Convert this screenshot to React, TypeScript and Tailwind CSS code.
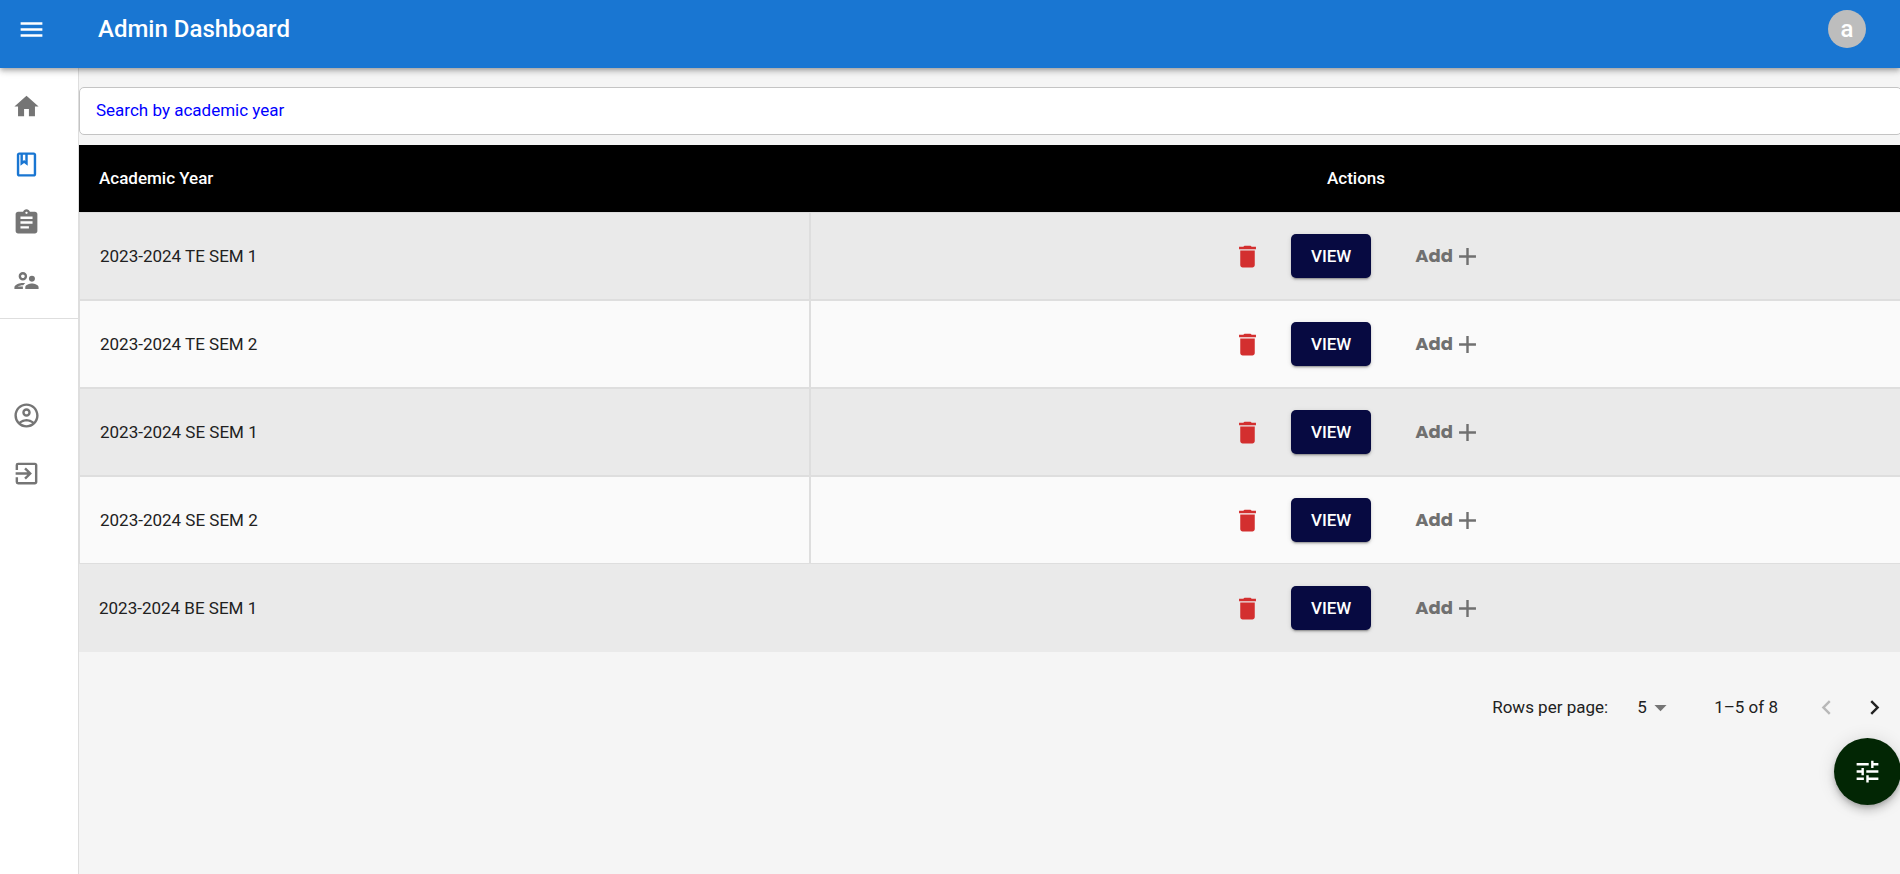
import {
  MdAdd,
  MdArrowDropDown,
  MdAssignment,
  MdDelete,
  MdExitToApp,
  MdHome,
  MdKeyboardArrowLeft,
  MdKeyboardArrowRight,
  MdMenu,
  MdOutlineAccountCircle,
  MdOutlineClass,
  MdOutlineSupervisorAccount,
  MdTune,
} from "react-icons/md";
import type { IconType } from "react-icons";

type NavItem = { label: string; icon: IconType; active?: boolean };

const mainNav: NavItem[] = [
  { label: "Home", icon: MdHome },
  { label: "Academic years", icon: MdOutlineClass, active: true },
  { label: "Subjects", icon: MdAssignment },
  { label: "Teachers", icon: MdOutlineSupervisorAccount },
];

const userNav: NavItem[] = [
  { label: "Profile", icon: MdOutlineAccountCircle },
  { label: "Logout", icon: MdExitToApp },
];

const years = [
  "2023-2024 TE SEM 1",
  "2023-2024 TE SEM 2",
  "2023-2024 SE SEM 1",
  "2023-2024 SE SEM 2",
  "2023-2024 BE SEM 1",
];

function NavList({ items }: { items: NavItem[] }) {
  return (
    <ul>
      {items.map(({ label, icon: Icon, active }) => (
        <li key={label}>
          <a
            href="#"
            aria-label={label}
            className={`flex h-[58px] items-center pl-3 ${active ? "text-[#1976d2]" : "text-[#757575]"}`}
          >
            <Icon className="size-[29px]" />
          </a>
        </li>
      ))}
    </ul>
  );
}

function YearRow({ year, last }: { year: string; last: boolean }) {
  const border = last ? "" : "border border-[#dedede]";
  return (
    <tr className="h-[88px] odd:bg-[#eaeaea] even:bg-[#fafafa]">
      <td className={`px-5 ${border}`}>{year}</td>
      <td className={border}>
        <div className="flex items-center justify-center pl-[3px]">
          <button type="button" aria-label={`Delete ${year}`} className="mr-[29px] text-[#d32f2f]">
            <MdDelete className="size-[29px]" />
          </button>
          <button
            type="button"
            className="mr-11 h-11 w-20 rounded-[5px] bg-[#070a41] font-medium text-white shadow-[0_3px_1px_-2px_rgba(0,0,0,0.2),0_2px_2px_0_rgba(0,0,0,0.14),0_1px_5px_0_rgba(0,0,0,0.12)]"
          >
            VIEW
          </button>
          <button
            type="button"
            className="flex items-center font-['Poppins','Inter',sans-serif] text-[18px] font-bold text-[#707070]"
          >
            Add
            <MdAdd className="size-[29px]" />
          </button>
        </div>
      </td>
    </tr>
  );
}

export default function App() {
  return (
    <div className="flex min-h-screen flex-col overflow-x-hidden bg-[#f5f5f5] font-[Roboto,sans-serif] text-[17px] leading-6 text-[#212121]">
      <header className="relative z-10 flex h-[68px] items-center bg-[#1976d2] pr-[34px] pb-[10px] pl-[17px] text-white shadow-[0_2px_4px_-1px_rgba(0,0,0,0.2),0_4px_5px_0_rgba(0,0,0,0.14),0_1px_10px_0_rgba(0,0,0,0.12)]">
        <button type="button" aria-label="Open menu" className="mr-[52px]">
          <MdMenu className="size-[29px]" />
        </button>
        <h1 className="grow text-2xl font-medium">Admin Dashboard</h1>
        <button
          type="button"
          aria-label="Account"
          className="flex size-[38px] items-center justify-center rounded-full bg-[#bdbdbd] text-2xl font-medium"
        >
          a
        </button>
      </header>

      <div className="flex grow">
        <nav className="w-[79px] shrink-0 border-r border-[#dedede] bg-white pt-[9px]">
          <NavList items={mainNav} />
          <hr className="mt-[9px] mb-[67px] border-[#dedede]" />
          <NavList items={userNav} />
        </nav>

        <main className="-mr-0.5 min-w-0 grow pt-[19px]">
          <input
            type="text"
            aria-label="Search by academic year"
            placeholder="Search by academic year"
            className="block h-12 w-full rounded-[5px] border border-[#c4c4c4] bg-white px-4 pb-0.5 placeholder:text-[#0000ff]"
          />

          <table className="mt-[10px] w-full table-fixed border-separate border-spacing-0">
            <thead>
              <tr className="h-[67px] bg-black text-white">
                <th className="w-[40.1%] px-5 pb-0.5 text-left font-medium">Academic Year</th>
                <th className="pb-0.5 font-medium">Actions</th>
              </tr>
            </thead>
            <tbody>
              {years.map((year, i) => (
                <YearRow key={year} year={year} last={i === years.length - 1} />
              ))}
            </tbody>
          </table>

          <div className="mt-6 flex h-[62px] items-center justify-end pr-[13px]">
            <label htmlFor="rows-per-page">Rows per page:</label>
            <div className="relative mr-[39px] ml-[29px] flex items-center">
              <select id="rows-per-page" defaultValue="5" className="w-[38px] appearance-none bg-transparent">
                <option>5</option>
                <option>10</option>
                <option>25</option>
              </select>
              <MdArrowDropDown className="pointer-events-none absolute right-0 size-[29px] text-[#757575]" />
            </div>
            <span>1–5 of 8</span>
            <button type="button" aria-label="Previous page" disabled className="ml-[34px] text-[#b8b8b8]">
              <MdKeyboardArrowLeft className="size-[29px]" />
            </button>
            <button type="button" aria-label="Next page" className="ml-[19px]">
              <MdKeyboardArrowRight className="size-[29px]" />
            </button>
          </div>
        </main>
      </div>

      <button
        type="button"
        aria-label="Filters"
        className="fixed -right-px bottom-[69px] flex size-[67px] items-center justify-center rounded-full bg-[#022604] text-white shadow-[0_3px_5px_-1px_rgba(0,0,0,0.2),0_6px_10px_0_rgba(0,0,0,0.14),0_1px_18px_0_rgba(0,0,0,0.12)]"
      >
        <MdTune className="size-[29px]" />
      </button>
    </div>
  );
}
